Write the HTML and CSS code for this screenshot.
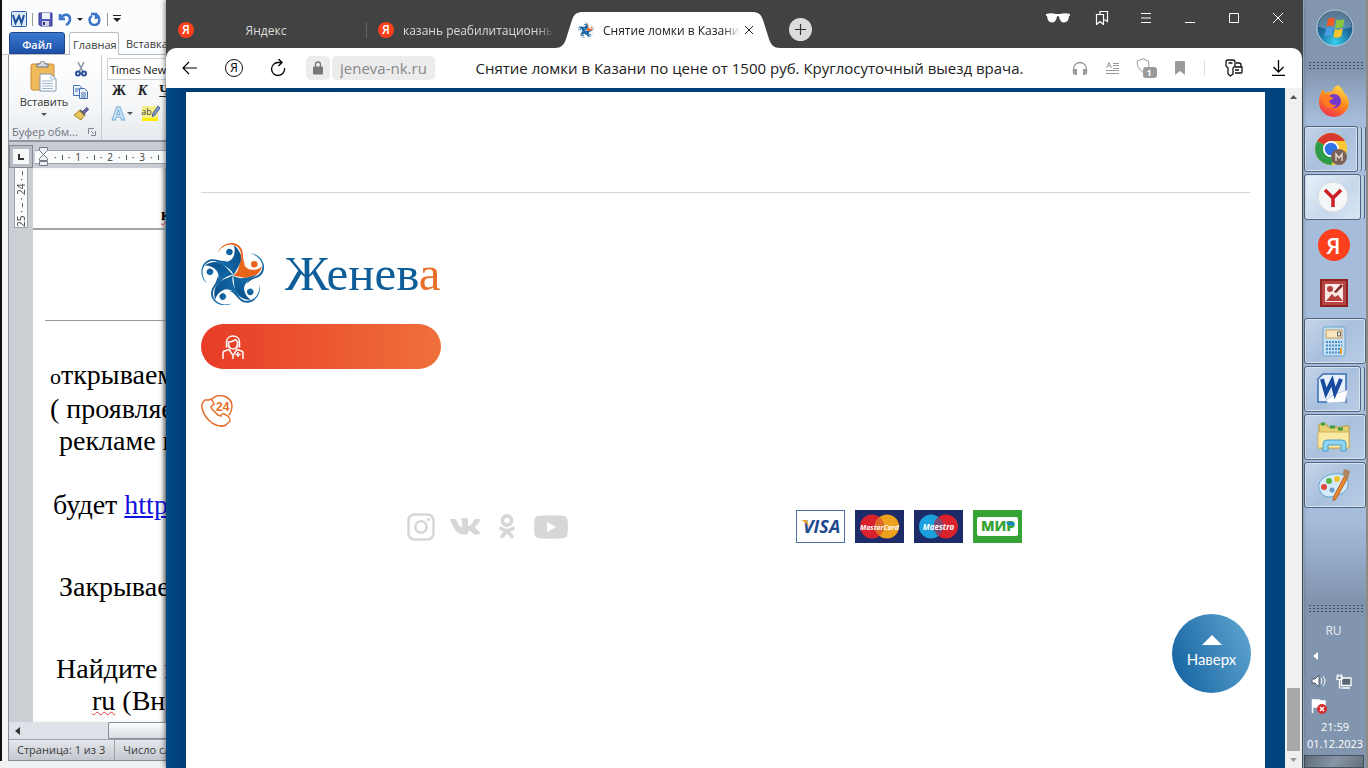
FILE: index.html
```html
<!DOCTYPE html>
<html lang="ru">
<head>
  <meta charset="UTF-8" />
  <meta name="viewport" content="width=device-width, initial-scale=1" />
  <title>Снятие ломки в Казани</title>
  <link rel="stylesheet" href="styles.css">
</head>
<body>

  <!-- shared logo mark -->
  <svg class="sprite" aria-hidden="true">
    <defs>
      <linearGradient id="blue" x1="0" y1="0" x2="1" y2="1">
        <stop offset="0" stop-color="#1a7ab8" />
        <stop offset="1" stop-color="#064a86" />
      </linearGradient>
      <g id="person">
        <path d="M20-67C25-40 32-20 50-17C62-15 74-18 84-26C78-8 66 4 48 7C30 9 14 2 1 1C14-10 18-26 19-40C20-50 19-58 20-67Z" />
        <circle cx="61" cy="-32" r="9.500" />
      </g>
      <path id="loop" d="M-46-66C-40-82-22-95-4-94C16-93 28-78 28-60C28-48 31-36 36-29C24-38 23-48 23-60C22-76 12-88-6-90C-20-91-36-82-46-66Z" />
      <symbol id="star" viewBox="0 0 195 186">
        <g transform="translate(97 97) scale(1.03)">
          <g fill="#e8641b"><use href="#person" /><use href="#loop" /></g>
          <g fill="url(#blue)">
            <use href="#person" transform="rotate(72)" />
            <use href="#person" transform="rotate(144)" />
            <use href="#person" transform="rotate(216)" />
            <use href="#person" transform="rotate(288)" />
            <use href="#loop" transform="rotate(72)" />
            <use href="#loop" transform="rotate(144)" />
            <use href="#loop" transform="rotate(216)" />
            <use href="#loop" transform="rotate(288)" />
          </g>
        </g>
      </symbol>
    </defs>
  </svg>

  <div class="desktop">

    <!-- Word -->
    <section class="word">
      <div class="word-title">
        <svg width="16" height="16" viewBox="0 0 16 16"><rect x=".5" y=".5" width="15" height="15" rx="1" fill="#dce9f7" stroke="#2b5fa8" /><path d="M2 4l2.500 8L8 5l2.500 7L13 4" fill="none" stroke="#1a4d9c" stroke-width="2" /></svg>
        <i class="bar"></i>
        <button class="icon-btn save" aria-label="Сохранить"><svg width="15" height="15" viewBox="0 0 15 15"><path d="M1 1h13v13H2.500L1 12.500Z" fill="#5359b8" stroke="#393f92" /><path d="M4 1h8v6H4Z" fill="#f1f3fb" /><path d="M4 9h7v5H4Z" fill="#cfd4e6" /><path d="M5 10h2v3H5Z" fill="#333a80" /></svg></button>
        <button class="icon-btn undo" aria-label="Отменить"><svg width="14" height="14" viewBox="0 0 14 14"><path d="M2 2v5h5M3 6c3-5 9-4 9 1 0 3-2 5-4 6" fill="none" stroke="#3b74c9" stroke-width="2.500" /></svg></button>
        <i class="caret"></i>
        <button class="icon-btn redo" aria-label="Вернуть"><svg width="14" height="14" viewBox="0 0 14 14"><path d="M3 2h5v5M8 3c4 1 5 9-1 10-6 0-7-7-3-9" fill="none" stroke="#3b74c9" stroke-width="2.500" /></svg></button>
        <i class="bar"></i>
        <svg width="8" height="8" viewBox="0 0 8 8"><path d="M0 0h8v1H0ZM0 3h8L4 7Z" fill="#222" /></svg>
      </div>
      <nav class="word-tabs">
        <a class="file" href="#">Файл</a>
        <a class="current" href="#">Главная</a>
        <a href="#">Вставка</a>
      </nav>
      <div class="ribbon">
        <div class="group clipboard">
          <div class="group-body">
            <button class="paste">
              <svg width="28" height="32" viewBox="0 0 28 32"><rect x="1" y="3" width="23" height="26" rx="2" fill="#f0b95a" stroke="#c98a35" /><path d="M7 6V3h3c0-4 5-4 5 0h3v3Z" fill="#d8dce2" stroke="#697585" /><path d="M10 13h11l5 5v12H10Z" fill="#fff" stroke="#8698ae" /><path d="M21 13v5h5M12 20h11M12 22.500h11M12 25h11M12 27.500h11" fill="none" stroke="#9db5d3" /></svg>
              <span>Вставить</span>
              <i class="caret"></i>
            </button>
            <div class="small-tools">
              <button class="icon-btn" aria-label="Вырезать"><svg width="14" height="15" viewBox="0 0 14 15"><path d="M4 0l5 10M10 0L5 10" stroke="#8795a8" stroke-width="1.500" /><circle cx="4" cy="11.500" r="2" fill="none" stroke="#28509c" stroke-width="2" /><circle cx="10" cy="11.500" r="2" fill="none" stroke="#28509c" stroke-width="2" /></svg></button>
              <button class="icon-btn" aria-label="Копировать"><svg width="16" height="14" viewBox="0 0 16 14"><g fill="#eaf2fc" stroke="#426fae"><path d="M.5.5h6l3 3v7h-9Z" /><path d="M6.500 3.500h5l3 3v7h-8Z" /></g><path d="M2 4h4M2 6h3M8 8h5M8 10h5M8 12h5" stroke="#426fae" /></svg></button>
              <button class="icon-btn" aria-label="Формат по образцу"><svg width="16" height="14" viewBox="0 0 16 14"><path d="M9 5l5-4.500 1.500 2L11 7Z" fill="#6c6bab" stroke="#484880" /><path d="M7 3l5 5-4 5-7-5Z" fill="#e9c65b" stroke="#a98322" /><path d="M7 3l5 5" stroke="#666" stroke-width="2" /></svg></button>
            </div>
          </div>
          <div class="group-name">Буфер обм...<svg width="8" height="8" viewBox="0 0 8 8"><path d="M.5 6V.5H6M3 3l3 3M7.500 3v4.500H3" fill="none" stroke="#7d848e" /></svg></div>
        </div>
        <div class="group fonts">
          <input class="font-name" type="text" value="Times New" aria-label="Шрифт">
          <div class="styles">
            <button class="icon-btn bold">Ж</button>
            <button class="icon-btn bold italic">К</button>
            <button class="icon-btn bold under">Ч</button>
          </div>
          <div class="styles second">
            <button class="icon-btn effect">A</button><i class="caret"></i>
            <button class="icon-btn marker"><span>ab</span><svg width="8" height="11" viewBox="0 0 8 11"><path d="M6 0l2 2-5 7-3 2 1-4Z" fill="#7e9cc9" stroke="#49638f" /></svg></button>
          </div>
        </div>
      </div>
      <div class="ruler">
        <button class="tabstop" aria-label="Табуляция"><svg width="6" height="6" viewBox="0 0 6 6"><path d="M1 0v5h5" fill="none" stroke="#333" stroke-width="2" /></svg></button>
        <div class="ruler-line">
          <svg width="10" height="20" viewBox="0 0 10 20"><path d="M.5.500h8v3l-4 4 4 4v2h-8v-2l4-4-4-4ZM.5 14.500h8v4h-8Z" fill="#eef0f3" stroke="#757b84" /></svg>
          <span>·</span><i></i><span>·</span><b>1</b><span>·</span><i></i><span>·</span><b>2</b><span>·</span><i></i><span>·</span><b>3</b><span>·</span><i></i>
        </div>
      </div>
      <div class="document">
        <div class="ruler-side"><div class="side-scale"><span>25 · – · 24 · –</span></div></div>
        <div class="pages">
          <div class="page-end"><span class="wavy">к</span></div>
          <div class="page">
            <hr>
            <p class="near"><small>о</small>ткрываем</p>
            <p class="near">( проявляе</p>
            <p class="mid">рекламе в</p>
            <p class="near link-line">будет <a href="#">https</a></p>
            <p class="mid close-line">Закрывае</p>
            <p class="mid find-line">Найдите в</p>
            <p class="far"><span class="wavy">ru</span> (Вне</p>
          </div>
        </div>
      </div>
      <div class="word-scroll"><button class="icon-btn" aria-label="Влево"><svg width="5" height="8" viewBox="0 0 5 8"><path d="M5 0v8L0 4Z" fill="#333" /></svg></button><div class="word-thumb"></div></div>
      <footer class="word-status"><span>Страница: 1 из 3</span><span>Число сл</span></footer>
    </section>

    <!-- Browser -->
    <section class="browser">
      <header class="tabbar">
        <div class="tab"><span class="ya">Я</span><a class="centered" href="#">Яндекс</a></div>
        <div class="tab second-tab"><span class="ya">Я</span><a class="fade" href="#">казань реабилитационный</a></div>
        <div class="tab active">
          <svg class="tab-shape" viewBox="0 0 225 36" preserveAspectRatio="none"><path d="M0 36C6 36 9 33 11 27L17 8C19 2 22 0 28 0H197C203 0 206 2 208 8L214 27C216 33 219 36 225 36Z" fill="#fff" /></svg>
          <svg class="favicon" width="16" height="16"><use href="#star" /></svg>
          <a class="fade" href="#">Снятие ломки в Казани</a>
          <button class="icon-btn" aria-label="Закрыть вкладку"><svg width="10" height="10" viewBox="0 0 10 10"><path d="M1 1l8 8M9 1L1 9" stroke="#222" /></svg></button>
        </div>
        <button class="icon-btn add-tab" aria-label="Новая вкладка"><svg width="13" height="13" viewBox="0 0 13 13"><path d="M6.500 1v11M1 6.500h11" stroke="#333" stroke-width="1.200" /></svg></button>
        <div class="window-tools">
          <button class="icon-btn" aria-label="Инкогнито"><svg width="24" height="10" viewBox="0 0 24 10"><path d="M0 1Q5-.5 10 1h4q5-1.500 10 0v1.500l-1 .5q-.5 6.500-5 6.500-4 0-5-6-1-.8-2 0-1 6-5 6-4.500 0-5-6.500l-1-.5Z" fill="#fff" /></svg></button>
          <button class="icon-btn" aria-label="Закладки"><svg width="14" height="14" viewBox="0 0 14 14"><path d="M1.500 3.500h7v10L5 10.500l-3.500 3ZM5 3.500v-3h7.500v10l-2-1.500H8.500" fill="none" stroke="#fff" stroke-width="1.200" /></svg></button>
          <button class="icon-btn" aria-label="Меню"><svg width="10" height="10" viewBox="0 0 10 10"><path d="M0 .5h10M0 5h10M0 9.500h10" stroke="#fff" /></svg></button>
          <button class="icon-btn" aria-label="Свернуть"><svg width="10" height="10" viewBox="0 0 10 10"><path d="M0 9.500h10" stroke="#fff" /></svg></button>
          <button class="icon-btn" aria-label="Развернуть"><svg width="10" height="10" viewBox="0 0 10 10"><path d="M.5.500h9v9h-9Z" fill="none" stroke="#fff" /></svg></button>
          <button class="icon-btn" aria-label="Закрыть"><svg width="10" height="10" viewBox="0 0 10 10"><path d="M0 0l10 10M10 0L0 10" stroke="#fff" /></svg></button>
        </div>
      </header>

      <div class="toolbar">
        <div class="nav-tools">
          <button class="icon-btn" aria-label="Назад"><svg width="16" height="14" viewBox="0 0 16 14"><path d="M15 7H1M7 1L1 7l6 6" fill="none" stroke="#000" stroke-width="1.200" /></svg></button>
          <button class="icon-btn ya-home" aria-label="Яндекс">Я</button>
          <button class="icon-btn" aria-label="Обновить"><svg width="16" height="18" viewBox="0 0 16 18"><path d="M14.500 9A6.500 6.500 0 1 1 8 3.500h4M8.500 0L12 3.500 8.500 7" fill="none" stroke="#000" stroke-width="1.300" /></svg></button>
        </div>
        <button class="icon-btn lock" aria-label="Сведения о сайте"><svg width="10" height="14" viewBox="0 0 10 14"><path d="M2.500 6V3.500a2.500 2.500 0 0 1 5 0V6" fill="none" stroke="#777" stroke-width="1.300" /><rect y="5.500" width="10" height="8" rx="1" fill="#777" /></svg></button>
        <input class="address" type="text" value="jeneva-nk.ru" aria-label="Адрес">
        <div class="page-title">Снятие ломки в Казани по цене от 1500 руб. Круглосуточный выезд врача.</div>
        <div class="page-tools">
          <button class="icon-btn" aria-label="Слушать"><svg width="16" height="14" viewBox="0 0 16 14"><path d="M1.500 13V8a6.500 6.500 0 0 1 13 0v5" fill="none" stroke="#999" stroke-width="1.300" /><path d="M1 8h4v6H3l-2-2ZM11 8h4v4l-2 2h-2Z" fill="#999" /></svg></button>
          <button class="icon-btn" aria-label="Режим чтения"><svg width="13" height="13" viewBox="0 0 13 13"><path d="M.5 6L3 .5 5.500 6M1.500 4h3M7 1.500h6M7 3.500h6M7 6.500h6M0 8.500h13M0 11.500h13" fill="none" stroke="#999" /></svg></button>
          <button class="icon-btn shield" aria-label="Защита"><svg width="21" height="20" viewBox="0 0 21 20"><path d="M7 .7l5.500 2.500.5 5-2 3M7 .7L1.200 3.200q-.5 7 5.800 11" fill="none" stroke="#999" /><rect x="7" y="9" width="14" height="11" rx="3" fill="#999" /></svg><span>1</span></button>
          <button class="icon-btn" aria-label="В закладки"><svg width="10" height="14" viewBox="0 0 10 14"><path d="M0 1q0-1 1-1h8q1 0 1 1v13L5 10l-5 4Z" fill="#999" /></svg></button>
        </div>
        <div class="end-tools">
          <button class="icon-btn" aria-label="Пароли"><svg width="18" height="18" viewBox="0 0 18 18"><path d="M3 9L1 7V3q0-2 2-2h5q2 0 2 2v4L8 9v6l-2.500 2L3 15ZM3.500 4h4" fill="none" stroke="#111" stroke-width="1.300" /><path d="M11 4h3q2 0 2 2v2M10 8h7v5q0 1-1 1h-6M10 11h4" fill="none" stroke="#111" stroke-width="1.300" /></svg></button>
          <button class="icon-btn" aria-label="Загрузки"><svg width="13" height="16" viewBox="0 0 13 16"><path d="M6.500 0v12M1.500 7l5 5 5-5M0 15.300h13" fill="none" stroke="#000" stroke-width="1.300" /></svg></button>
        </div>
      </div>

      <div class="viewport">
        <main class="site">
          <hr>
          <a class="logo" href="#">
            <svg width="65" height="62"><use href="#star" /></svg>
            <span>Женев<em>а</em></span>
          </a>
          <button class="call" aria-label="Вызвать врача">
            <svg width="22" height="25" viewBox="0 0 22 25"><g fill="none" stroke="#fff" stroke-width="1.500"><path d="M4.500 12.500V7c0-8 13-8 13 0v5.500M6.500 12.500V7c4 0 5-1 7-2.500l2 2.500v5.500M6.500 8q0 6 4.500 6t4.500-6M1 24v-6q0-2 3-2.500l3-1 4 6 4-6 3 1q3 .5 3 2.500v6M11 20.500V24" /><path d="M16 17v5M13.500 19.500h5" /></g></svg>
          </button>
          <a class="phone" href="#" aria-label="Круглосуточно">
            <svg width="32" height="32" viewBox="0 0 32 32"><path d="M8 5L4 5Q0 8 1 13 3 22 11 28 19 33 25 30L29 26Q29 23 27 21L23 19Q21 18 20 21L17 20 11 14 10 12 13 9Q12 6 10 4L8 5M11 4Q16-1 23 1 31 4 31 11 31 16 28 20" fill="none" stroke="#e56e2c" stroke-width="1.500" /><text x="15" y="16">24</text></svg>
          </a>
          <div class="links">
            <div class="social">
              <a href="#" aria-label="Instagram"><svg width="28" height="28" viewBox="0 0 28 28"><rect x="1.500" y="1.500" width="25" height="25" rx="6" fill="none" stroke="#d7d7d7" stroke-width="2.500" /><circle cx="14" cy="14" r="5.700" fill="none" stroke="#d7d7d7" stroke-width="2.500" /><circle cx="21.500" cy="6.500" r="1.700" fill="#d7d7d7" /></svg></a>
              <a href="#" aria-label="ВКонтакте"><svg width="30" height="17" viewBox="0 0 30 17"><path d="M0 1h5q1 0 1.500 1Q9 8 11 9.500q1.200 0 1.200-2V4q0-2-1.700-2.500Q11.500 0 14 0h2q2 0 2 2v5.500q1 1.500 4-2L24 2q.5-1 1.500-1h4q1 .5 0 2.500L25 9.500l4.500 4.500q1 2-1 2.500H25q-1.500 0-3.500-2.500-2.500-3-3.500 0 0 2.500-1 2.500h-3Q7 16.500 4 10L0 2Z" fill="#d7d7d7" /></svg></a>
              <a href="#" aria-label="Одноклассники"><svg width="24" height="25" viewBox="-3 0 24 25"><g fill="none" stroke="#d7d7d7" stroke-width="3.600" stroke-linecap="round"><circle cx="9" cy="6.500" r="4.600" /><path d="M3 14.500q6 4 12 0M9 17l-5 5.500M9 17l5 5.500" /></g></svg></a>
              <a href="#" aria-label="YouTube"><svg width="34" height="24" viewBox="0 0 34 24"><path d="M5 .8Q17-.5 29 .8 33 1 33.500 5q.8 7 0 14-.5 4-4.500 4.200-12 1-24 0Q1 23 .5 19q-.8-7 0-14Q1 1 5 .8Z" fill="#d7d7d7" /><path d="M13 7l9 5-9 5Z" fill="#fff" /></svg></a>
            </div>
            <div class="cards">
              <svg width="49" height="33" viewBox="0 0 49 33"><rect x=".5" y=".5" width="48" height="32" fill="#fff" stroke="#4c71a8" /><text class="visa" x="7" y="23">VISA</text><path d="M5 10h6l2 7Q10 12 5 10Z" fill="#f0a52e" /></svg>
              <svg width="49" height="33" viewBox="0 0 49 33"><rect width="49" height="33" fill="#1d2b68" /><circle cx="17" cy="16.500" r="12" fill="#d9222c" /><circle cx="32" cy="16.500" r="12" fill="#eda21e" /><path d="M24.500 7a12 12 0 0 1 0 19 12 12 0 0 1 0-19Z" fill="#dd6a28" /><text class="brand" x="24.500" y="20">MasterCard</text></svg>
              <svg width="49" height="33" viewBox="0 0 49 33"><rect width="49" height="33" fill="#1d2b68" /><circle cx="17" cy="16.500" r="12" fill="#1aa0dc" /><circle cx="32" cy="16.500" r="12" fill="#d9222c" /><path d="M24.500 7a12 12 0 0 1 0 19 12 12 0 0 1 0-19Z" fill="#7c4770" /><text class="brand maestro" x="24.500" y="20">Maestro</text></svg>
              <svg width="49" height="33" viewBox="0 0 49 33"><rect width="49" height="33" fill="#36a435" /><rect x="4" y="7" width="41" height="19" rx="2" fill="#fff" /><text class="mir" x="8" y="21">МИР</text><path d="M33 12h6q2 0 2 2 0 1-1 1.500h-5Z" fill="#1b83c4" /></svg>
            </div>
          </div>
        </main>
        <button class="to-top"><svg width="20" height="10" viewBox="0 0 20 10"><path d="M0 10L10 0l10 10Z" fill="#fff" /></svg>Наверх</button>
        <div class="scrollbar">
          <svg width="7" height="4" viewBox="0 0 7 4"><path d="M0 4L3.500 0 7 4Z" fill="#555" /></svg>
          <div class="thumb"></div>
          <svg width="7" height="4" viewBox="0 0 7 4"><path d="M0 0L3.500 4 7 0Z" fill="#999" /></svg>
        </div>
      </div>
    </section>

    <!-- Taskbar -->
    <aside class="taskbar">
      <button class="start" aria-label="Пуск"><svg width="38" height="38" viewBox="0 0 38 38"><defs><radialGradient id="orb" cx=".5" cy=".9" r=".9"><stop offset="0" stop-color="#38d0f0" /><stop offset=".5" stop-color="#1c6fa0" /><stop offset="1" stop-color="#24405f" /></radialGradient></defs><circle cx="19" cy="19" r="18" fill="url(#orb)" stroke="#bcd3e6" /><path d="M2.500 18a16.500 16.500 0 0 1 33 0Q19 23 2.500 18Z" fill="#fff" opacity=".25" /><path d="M12 10q4-2 7-.5l-1.500 8q-4-1.500-7 .5Z" fill="#ee5b26" /><path d="M20.500 10.500q4 1.500 8-.5l-1.500 8q-4 2-8 .5Z" fill="#8cc63e" /><path d="M10 19.500q4-2 7-.5l-1.500 8q-3-1.500-7 .5Z" fill="#4a9de0" /><path d="M18.800 20q4 1.500 8-.5l-1.500 8q-4 2-8 .5Z" fill="#fbc52d" /></svg></button>
      <div class="grip"></div>
      <div class="apps">
        <button class="app" aria-label="Firefox"><svg width="32" height="32" viewBox="0 0 32 32"><defs><linearGradient id="fox" x1=".8" y1="0" x2=".3" y2="1"><stop offset="0" stop-color="#ffe14a" /><stop offset=".5" stop-color="#ff8a1e" /><stop offset="1" stop-color="#f0304c" /></linearGradient></defs><path d="M20 0q5 4 6 8 4 3 5 9A15 15 0 0 1 1 17Q1 10 5 4l2 4q4-2 7-1Q15 2 20 0Z" fill="url(#fox)" /><circle cx="16" cy="16" r="7" fill="#7238c8" /><path d="M5 10q5-1 8 2l3 1-5 3q3 6 8 3-5 7-12 2-4-5-2-11Z" fill="#ff7a20" /></svg></button>
        <button class="app open stack double" aria-label="Chrome"><svg width="33" height="33" viewBox="0 0 33 33"><circle cx="16" cy="16" r="16" fill="#fcc934" /><path d="M16 16L2.200 8A16 16 0 0 1 29.800 8H16Z" fill="#d93a30" /><path d="M16 16L2.200 8A16 16 0 0 0 16 32l7-12Z" fill="#2c9c4b" /><circle cx="16" cy="16" r="8" fill="#fff" /><circle cx="16" cy="16" r="6.300" fill="#2d72e6" /><circle cx="24" cy="24" r="8" fill="#7b6259" /><path d="M21 28v-7l3 4 3-4v7" fill="none" stroke="#e8dfdb" stroke-width="1.300" /></svg></button>
        <button class="app open stack lit" aria-label="Яндекс Браузер"><svg width="32" height="32" viewBox="0 0 32 32"><circle cx="16" cy="16" r="15" fill="#f5f6f7" stroke="#d5d9de" /><path d="M8 9l8 8v9M24 9l-8 8" fill="none" stroke="#cd1f26" stroke-width="3.500" /></svg></button>
        <button class="app" aria-label="Яндекс"><span class="ya big">Я</span></button>
        <button class="app" aria-label="Picture Manager"><svg width="28" height="28" viewBox="0 0 28 28"><rect x="1" y="1" width="26" height="26" fill="#b84543" stroke="#8d2422" stroke-width="2" /><rect x="5" y="5" width="18" height="18" fill="#f8e9e6" /><path d="M6 22l6-7 3 3 3-2 5 6Z" fill="#b5403e" /><circle cx="10" cy="10" r="3" fill="#b5403e" /><path d="M14 13l7-8 2 2-7 7Z" fill="#7c2422" /></svg></button>
        <button class="app open" aria-label="Калькулятор"><svg width="24" height="31" viewBox="0 0 24 31"><rect x="1" y="1" width="22" height="29" rx="2" fill="#c5e0f4" stroke="#6ba3cc" /><rect x="4" y="4" width="16" height="8" fill="#f7e6c0" stroke="#c69b58" /><path d="M15.500 6h3v4h-3Z" fill="none" stroke="#5b6670" /><path d="M4 16h16M4 19.500h16M4 23h16M4 26.500h16" stroke="#4d8ec4" stroke-width="2" stroke-dasharray="2 1" /><path d="M19 22v6" stroke="#f0a030" stroke-width="2" /></svg></button>
        <button class="app open stack" aria-label="Word"><svg width="32" height="32" viewBox="0 0 32 32"><path d="M6 1h23v28H1V6Z" fill="#e7f0fa" stroke="#3a6fb5" stroke-width="1.500" /><path d="M9 27l9-6 13-4-3 12-17 1Z" fill="#fff" stroke="#b9cce3" /><path d="M5 6l4 14 6-12 3 12 6-14" fill="none" stroke="#174a9c" stroke-width="4" /></svg></button>
        <button class="app open" aria-label="Проводник"><svg width="34" height="30" viewBox="0 0 34 30"><path d="M2 2h7l2 3h14l2-1h5v22H2Z" fill="#e8cf73" stroke="#b99b40" /><path d="M4 2h4M13 5h5M21 7h5" stroke="#3d9b45" stroke-width="3" /><path d="M1 10h31v16H1Z" fill="#fae9a2" stroke="#cfb259" /><path d="M6 29v-7q0-4 4-4h15q4 0 4 4v7h-5v-6H11v6Z" fill="#8fd4f0" stroke="#4c9fc6" /></svg></button>
        <button class="app open" aria-label="Paint"><svg width="34" height="32" viewBox="0 0 34 32"><path d="M16 5q13-2 15 8 1 9-9 13-13 5-18-2-5-8 1-14 4-4 11-5Z" fill="#d3ebfa" stroke="#68a6d0" /><circle cx="7" cy="18" r="3" fill="#e04a36" /><circle cx="12" cy="12" r="3" fill="#5ab442" /><circle cx="20" cy="10" r="3" fill="#f3c12c" /><circle cx="15" cy="21" r="2.500" fill="#6a9bc8" /><path d="M27 8l3 2-11 20-3 2 1-5Z" fill="#e98b35" stroke="#b9621e" /><path d="M27 0l6 2-2 8-4-2-1-4Z" fill="#b0855b" /></svg></button>
      </div>
      <div class="grip low"></div>
      <div class="tray">
        <button class="icon-btn lang">RU</button>
        <button class="icon-btn more" aria-label="Скрытые значки"><svg width="5" height="8" viewBox="0 0 5 8"><path d="M5 0v8L0 4Z" fill="#fff" /></svg></button>
        <div class="tray-icons">
          <svg width="15" height="14" viewBox="0 0 15 14"><path d="M1 5h3l4-4v12L4 9H1Z" fill="#fff" stroke="#4d5968" /><path d="M10 4q2 3 0 6M12 2q4 5 0 10" fill="none" stroke="#fff" /></svg>
          <svg width="16" height="15" viewBox="0 0 16 15"><path d="M5.500 4h9.500v7.500H5.500ZM7 14h7" fill="#5a6878" stroke="#fff" stroke-width="1.300" /><path d="M1 2h5v3.500H1ZM2 0v2M5 0v2M3.500 6v8H7" fill="none" stroke="#fff" stroke-width="1.200" /></svg>
          <svg width="16" height="16" viewBox="0 0 16 16"><path d="M1.500 1v14M2 2h6l2 1h4v7H8L6 9H2Z" fill="#fff" stroke="#fff" stroke-width="1.500" /><circle cx="11" cy="11" r="5" fill="#d62e2e" /><path d="M9 9l4 4M13 9l-4 4" stroke="#fff" stroke-width="1.500" /></svg>
        </div>
        <time class="clock">21:59<br>01.12.2023</time>
      </div>
      <button class="show-desktop" aria-label="Свернуть все окна"></button>
    </aside>
  </div>

</body>
</html>
```
FILE: styles.css
```css
* {
  box-sizing: border-box;
}

body {
  margin: 0;
  font-family: "Open Sans", "Noto Sans", sans-serif;
  background-color: #8d8a86;
  overflow: hidden;
}

button,
input {
  font-family: inherit;
  margin: 0;
}

a {
  color: inherit;
  text-decoration: none;
}

svg {
  display: block;
  flex-shrink: 0;
}

.sprite {
  position: absolute;
  width: 0;
  height: 0;
}

.icon-btn {
  display: flex;
  align-items: center;
  justify-content: center;
  flex-shrink: 0;
  padding: 0;
  border: none;
  background: none;
  color: inherit;
}

.caret {
  border: 3px solid transparent;
  border-top: 3px solid #555;
  border-bottom: none;
}

.desktop {
  display: grid;
  grid-template-columns: 166px 1fr 65px;
  height: 100vh;
}

/* Word */
.word {
  display: flex;
  flex-direction: column;
  min-width: 0;
  overflow: hidden;
  padding-left: 9px;
  background: linear-gradient(90deg, #111 2px, #f3f5f7 2px, #f3f5f7 8px, #8a9099 8px);
  border-bottom: 7px solid #eef0f2;
  font-size: 11px;
  color: #3b3b3b;
}

.word > * {
  flex-shrink: 0;
}

.word-title {
  display: flex;
  align-items: center;
  gap: 5px;
  height: 32px;
  margin-left: -7px;
  padding: 6px 0 0 9px;
  background-color: #fbfcfd;
}

.bar {
  width: 1px;
  height: 13px;
  background-color: #999;
}

.word-title .caret {
  border-top-color: #222;
}

.word-tabs {
  display: flex;
  height: 23px;
  margin-left: -7px;
  padding-left: 7px;
  background-color: #fbfcfd;
  border-bottom: 1px solid #b9bec5;
}

.word-tabs a {
  flex-shrink: 0;
  padding: 0 7px;
  line-height: 23px;
  white-space: nowrap;
}

.word-tabs .file {
  width: 56px;
  background: linear-gradient(#3c79d0, #1c4fa8);
  border: 1px solid #1d468f;
  border-radius: 3px 3px 0 0;
  color: #fff;
  font-weight: 600;
  text-align: center;
}

.word-tabs .current {
  width: 50px;
  height: 23px;
  margin-left: 4px;
  padding: 0 3px;
  background-color: #fff;
  border: 1px solid #b9bec5;
  border-bottom: none;
  border-radius: 3px 3px 0 0;
}

.ribbon {
  display: flex;
  height: 87px;
  background: linear-gradient(#fff, #f4f6f8 60%, #e6eaee);
  border-bottom: 2px solid #8f959d;
}

.group {
  flex-shrink: 0;
  border-right: 1px solid #c5cad0;
}

.clipboard {
  display: flex;
  flex-direction: column;
  justify-content: space-between;
  width: 93px;
}

.group-body {
  display: flex;
  gap: 4px;
  padding: 6px 0 0 10px;
}

.paste {
  display: flex;
  flex-direction: column;
  align-items: center;
  width: 50px;
  padding: 0;
  border: none;
  background: none;
  color: #333;
  font-size: 11px;
  line-height: 18px;
}

.paste .caret {
  margin-top: 2px;
}

.small-tools {
  display: flex;
  flex-direction: column;
  gap: 8px;
  padding-top: 1px;
}

.group-name {
  display: flex;
  align-items: center;
  justify-content: space-between;
  padding: 0 5px 0 3px;
  line-height: 16px;
  color: #6e747c;
}

.fonts {
  width: 120px;
  padding: 3px 0 0 5px;
}

.font-name {
  width: 100px;
  height: 22px;
  padding: 0 2px;
  border: 1px solid #cdd2d8;
  background-color: #fff;
  font-size: 11px;
  color: #111;
}

.styles {
  display: flex;
  align-items: center;
  gap: 12px;
  height: 22px;
  padding-left: 5px;
}

.second {
  gap: 3px;
}

.bold {
  font-family: "Liberation Serif", serif;
  font-weight: bold;
  font-size: 14px;
  color: #222;
}

.italic {
  font-style: italic;
}

.under {
  text-decoration: underline;
}

.effect {
  font-size: 18px;
  font-weight: bold;
  color: #e4f2fc;
  -webkit-text-stroke: 1px #72acd8;
}

.marker {
  width: 16px;
  margin-left: 6px;
  background-color: #f6f08a;
  border-bottom: 3px solid #ffee00;
  font-size: 9px;
  line-height: 12px;
}

.ruler {
  display: flex;
  height: 26px;
  padding-top: 3px;
  background-color: #c9cdd3;
}

.tabstop {
  display: flex;
  align-items: center;
  justify-content: center;
  flex-shrink: 0;
  width: 24px;
  height: 23px;
  padding: 0;
  border: 4px solid #b8bdc4;
  outline: 1px solid #838990;
  outline-offset: -1px;
  background-color: #f6f7f9;
}

.ruler-line {
  display: flex;
  align-items: center;
  gap: 5px;
  flex-shrink: 0;
  width: 160px;
  height: 14px;
  margin: 5px 0 0 2px;
  padding-left: 4px;
  background-color: #fafbfc;
  border: 1px solid #9ca2aa;
  border-left: none;
  font-size: 10px;
  line-height: 12px;
}

.ruler-line i {
  width: 1px;
  height: 5px;
  background-color: #555;
}

.ruler-line b {
  font-weight: normal;
}

.word .document {
  display: flex;
  flex: 1 1 0;
  min-height: 0;
  overflow: hidden;
  background-color: #fff;
}

.ruler-side {
  flex-shrink: 0;
  width: 24px;
  padding-left: 5px;
  background-color: #cbcfd4;
}

.side-scale {
  display: flex;
  justify-content: center;
  width: 14px;
  height: 60px;
  background-color: #fafbfc;
  border: 1px solid #9ca2aa;
  border-top: none;
  font-size: 10px;
  line-height: 12px;
}

.side-scale span {
  writing-mode: vertical-rl;
  transform: rotate(180deg);
  white-space: nowrap;
}

.pages {
  flex: 1;
  min-width: 0;
  overflow: hidden;
  background-color: #fff;
  color: #000;
  font-family: "Liberation Serif", serif;
  white-space: nowrap;
  box-shadow: inset -5px 0 5px -3px #999;
}

.page-end {
  height: 62px;
  padding: 38px 0 0 128px;
  border-bottom: 2px solid #a0a4a8;
  font-size: 16px;
  font-weight: bold;
  line-height: 18px;
}

.wavy {
  text-decoration: underline wavy #e23b3b 1px;
}

.page hr {
  margin: 90px 0 38px 12px;
  border: none;
  border-top: 1px solid #999;
}

.page p {
  margin: 0;
  font-size: 28px;
  line-height: 32px;
}

.page small {
  font-size: 22px;
}

.page a {
  color: #1111dd;
  text-decoration: underline;
}

.page .near {
  padding-left: 17px;
}

.page .mid {
  padding-left: 26px;
}

.page .far {
  padding-left: 59px;
}

.page .link-line {
  margin-top: 32px;
  padding-left: 20px;
}

.page .close-line {
  margin-top: 50px;
}

.page .find-line {
  margin-top: 50px;
  padding-left: 23px;
}

.word-scroll {
  display: flex;
  height: 17px;
  background-color: #dde1e8;
}

.word-scroll .icon-btn {
  width: 16px;
}

.word-thumb {
  flex: 1;
  margin-left: 83px;
  border: 1px solid #868d97;
  border-right: none;
  border-radius: 2px 0 0 2px;
  background: linear-gradient(#fbfcfd, #d9dde3);
}

.word-status {
  display: flex;
  height: 22px;
  border-top: 1px solid #9ba1a8;
  border-bottom: 1px solid #868c94;
  background: linear-gradient(#e5e8ec, #c3c8ce);
  line-height: 20px;
  white-space: nowrap;
}

.word-status span {
  padding: 0 9px 0 8px;
  border-right: 1px solid #9ba1a8;
}

/* Browser */
.browser {
  position: relative;
  display: flex;
  flex-direction: column;
  min-width: 0;
  min-height: 0;
  background-color: #424242;
  border-right: 1px solid #3c4650;
  box-shadow: -1px 0 5px rgba(0, 0, 0, 0.5);
}

.tabbar {
  display: flex;
  height: 48px;
  padding-top: 12px;
  font-size: 12px;
  color: #dcdcdc;
}

.tab {
  position: relative;
  display: flex;
  align-items: center;
  gap: 9px;
  flex-shrink: 0;
  width: 200px;
  height: 36px;
  padding: 0 12px;
}

.tab a {
  flex: 1;
  overflow: hidden;
  white-space: nowrap;
}

.tab .centered {
  padding-right: 25px;
  text-align: center;
}

.fade {
  -webkit-mask-image: linear-gradient(90deg, #000 88%, transparent);
  mask-image: linear-gradient(90deg, #000 88%, transparent);
}

.second-tab::before {
  content: "";
  position: absolute;
  left: 0;
  width: 1px;
  height: 16px;
  background-color: #666;
}

.ya {
  display: flex;
  align-items: center;
  justify-content: center;
  flex-shrink: 0;
  width: 16px;
  height: 16px;
  border-radius: 50%;
  background-color: #fc3f1d;
  color: #fff;
  font-size: 12px;
  font-weight: 600;
  line-height: 16px;
}

.big {
  width: 32px;
  height: 32px;
  font-size: 22px;
}

.active {
  width: 225px;
  margin-left: -11px;
  padding: 0 21px 0 23px;
  color: #222;
}

.active > * {
  position: relative;
}

.active .icon-btn {
  margin-left: -5px;
  padding-right: 5px;
}

.active .tab-shape {
  position: absolute;
  left: 0;
  top: 0;
  width: 100%;
  height: 100%;
}

.add-tab {
  width: 23px;
  height: 23px;
  margin: 6px 0 0 9px;
  border-radius: 50%;
  background-color: #dcdcdc;
}

.window-tools {
  display: flex;
  height: 36px;
  margin: -12px 2px 0 auto;
}

.window-tools .icon-btn {
  width: 44px;
}

.toolbar {
  display: flex;
  align-items: center;
  height: 40px;
  background-color: #fff;
  border-radius: 10px 10px 0 0;
}

.nav-tools {
  display: flex;
  gap: 20px;
  padding: 0 16px 0 12px;
}

.nav-tools .icon-btn {
  width: 24px;
}

.nav-tools .ya-home {
  width: 18px;
  height: 18px;
  margin: 0 3px;
  border: 1px solid #111;
  border-radius: 50%;
  font-size: 12px;
  line-height: 14px;
}

.lock,
.address {
  height: 24px;
  border: none;
  border-radius: 5px;
  background-color: #ececec;
}

.lock {
  width: 24px;
}

.address {
  width: 103px;
  margin-left: 2px;
  padding: 0 8px;
  color: #888;
  font-size: 15px;
}

.page-title {
  flex: 1;
  min-width: 0;
  overflow: hidden;
  text-align: center;
  white-space: nowrap;
  font-size: 15px;
  color: #222;
}

.page-tools {
  display: flex;
  align-items: center;
  padding-right: 8px;
}

.page-tools .icon-btn {
  width: 32px;
}

.page-tools .shield {
  position: relative;
  width: 36px;
}

.shield span {
  position: absolute;
  right: 8px;
  bottom: 0;
  width: 14px;
  color: #fff;
  font-size: 9px;
  font-weight: bold;
  line-height: 11px;
}

.end-tools {
  display: flex;
  align-items: center;
  height: 16px;
  padding: 0 2px 0 7px;
  border-left: 1px solid #ddd;
}

.end-tools .icon-btn {
  width: 44px;
}

.viewport {
  position: relative;
  display: flex;
  flex: 1;
  min-height: 0;
  padding: 0 0 0 20px;
  background: linear-gradient(90deg, #004a87, #003b73 20px, #00437f);
}

.site {
  flex: 1;
  min-width: 0;
  margin: 4px 20px 0 0;
  padding: 100px 15px 0;
  background-color: #fff;
}

.site hr {
  margin: 0;
  border: none;
  border-top: 1px solid #d5d5d5;
}

.logo {
  display: flex;
  align-items: center;
  gap: 19px;
  width: 240px;
  height: 62px;
  margin-top: 50px;
}

.logo span {
  font-family: "Liberation Serif", serif;
  font-size: 49px;
  line-height: 56px;
  color: #0c5d98;
}

.logo em {
  font-style: normal;
  color: #e8702a;
}

.call {
  display: flex;
  align-items: center;
  width: 240px;
  height: 45px;
  margin-top: 19px;
  padding: 2px 21px 0;
  border: none;
  border-radius: 23px;
  background: linear-gradient(90deg, #e73c27, #ef703a);
}

.phone {
  display: block;
  width: 32px;
  margin-top: 26px;
}

.phone text {
  font-family: "Liberation Sans", sans-serif;
  font-size: 12px;
  font-weight: bold;
  fill: #e56e2c;
}

.links {
  display: grid;
  grid-template-columns: 1fr 1fr;
  margin-top: 83px;
  padding: 0 130px 0 75px;
}

.social,
.cards {
  display: flex;
  align-items: center;
  justify-content: center;
}

.social {
  gap: 15px;
}

.cards {
  gap: 10px;
}

.visa {
  font-size: 18px;
  font-weight: bold;
  font-style: italic;
  fill: #1f4a91;
}

.brand {
  font-size: 7px;
  font-weight: bold;
  font-style: italic;
  text-anchor: middle;
  fill: #fff;
}

.maestro {
  font-size: 8px;
}

.mir {
  font-size: 14px;
  font-weight: 800;
  fill: #36a435;
}

.to-top {
  position: absolute;
  right: 51px;
  bottom: 75px;
  display: flex;
  flex-direction: column;
  align-items: center;
  gap: 5px;
  width: 79px;
  height: 79px;
  padding: 21px 0 0;
  border: none;
  border-radius: 50%;
  background: linear-gradient(70deg, #10609d, #62a7d3);
  color: #fff;
  font-family: Lato, sans-serif;
  font-size: 15px;
  line-height: 18px;
}

.scrollbar {
  display: flex;
  flex-direction: column;
  align-items: center;
  width: 17px;
  padding: 7px 0 6px;
  background-color: #f0f0f0;
}

.thumb {
  width: 13px;
  height: 63px;
  margin: auto 0 7px;
  background-color: #a8a8a8;
}

/* Taskbar */
.taskbar {
  display: flex;
  flex-direction: column;
  align-items: center;
  min-height: 0;
  border-left: 1px solid #a9bbcf;
  border-right: 2px solid #8d8a86;
  background: linear-gradient(#8396b0 0, #8396b0 70px, #a5bddb 120px, #a5bddb 520px, #8295af 600px);
}

.start {
  margin-top: 9px;
  padding: 0;
  border: none;
  background: none;
}

.grip {
  width: 55px;
  height: 9px;
  margin-top: 14px;
  background-image: radial-gradient(circle, #3f4d60 1px, transparent 1px);
  background-size: 4px 3px;
}

.apps {
  display: flex;
  flex-direction: column;
  gap: 2px;
  align-self: stretch;
  margin-top: 8px;
}

.app {
  display: flex;
  align-items: center;
  justify-content: center;
  height: 46px;
  padding: 0 3px 0 0;
  border: 1px solid transparent;
  border-radius: 3px;
  background: none;
}

.open {
  border-color: #526580;
  background: linear-gradient(135deg, #c6d5e8, #a9c0dd 50%, #b8cce4);
  box-shadow: inset 0 0 0 1px #d7e3f1;
}

.stack {
  margin-right: 5px;
  padding: 0;
  box-shadow: inset 0 0 0 1px #d7e3f1, 4px 0 0 -1px #b8cce4, 5px 0 0 -1px #526580;
}

.double {
  margin-right: 8px;
  box-shadow: inset 0 0 0 1px #d7e3f1, 4px 0 0 -1px #b8cce4, 5px 0 0 -1px #526580, 8px 0 0 -1px #b8cce4, 9px 0 0 -1px #526580;
}

.lit {
  background: linear-gradient(135deg, #e9f1fa, #c6d7ec 60%, #dbe7f4);
}

.low {
  margin-top: auto;
}

.tray {
  align-self: stretch;
  padding-top: 8px;
  color: #fff;
}

.lang {
  width: 100%;
  height: 18px;
  padding-right: 3px;
  font-size: 12px;
  color: #e8ecf1;
}

.more {
  height: 18px;
  margin: 8px 0 0 9px;
}

.tray-icons {
  display: flex;
  flex-wrap: wrap;
  gap: 9px 10px;
  padding: 9px 0 0 7px;
}

.clock {
  display: block;
  padding-top: 4px;
  text-align: center;
  font-size: 11px;
  line-height: 17px;
}

.show-desktop {
  flex-shrink: 0;
  align-self: stretch;
  height: 13px;
  margin: 3px 2px 0 0;
  padding: 0;
  border: 1px solid #46525f;
  background: linear-gradient(120deg, #5f6c7b, #8695a6 50%, #67717d);
}
```
